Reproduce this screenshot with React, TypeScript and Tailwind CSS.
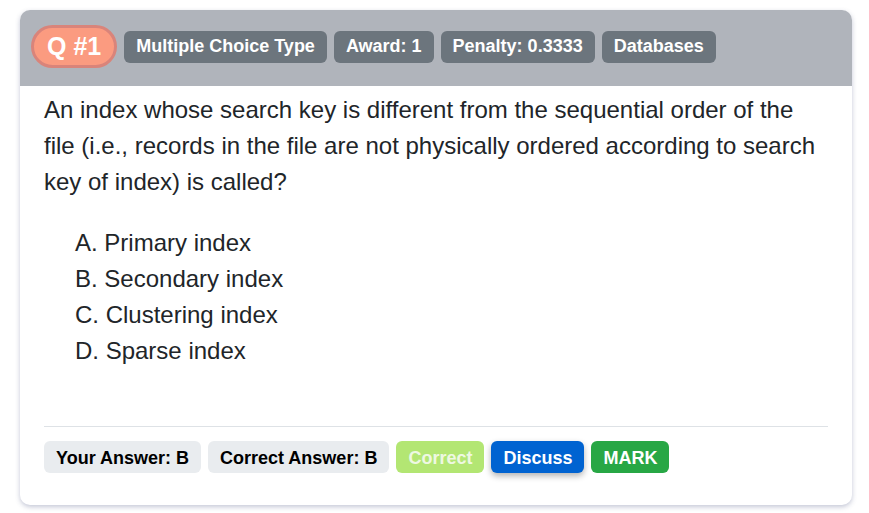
const badges = ["Multiple Choice Type", "Award: 1", "Penalty: 0.3333", "Databases"]

const options = [
  "A. Primary index",
  "B. Secondary index",
  "C. Clustering index",
  "D. Sparse index",
]

export default function App() {
  return (
    <div className="min-h-[513px] bg-white pl-5 pr-[17px] pt-[10px] font-['Liberation_Sans',Arial,sans-serif]">
      <div className="overflow-hidden rounded-[10px] bg-white shadow-[0_2px_5px_rgba(60,70,120,0.3)]">
        <div className="flex h-[76px] items-center gap-[7px] bg-[#b0b4bb] px-[11px] pb-[3px]">
          <span className="flex h-[43px] items-center rounded-full border-[3px] border-[#d9847a] bg-[#fb9b80] px-[13px] text-[25px] font-bold text-white">
            Q #1
          </span>
          {badges.map((b) => (
            <span
              key={b}
              className="flex h-8 items-center rounded-md bg-[#6c757d] px-3 text-[18px] font-bold text-white"
            >
              {b}
            </span>
          ))}
        </div>

        <div className="px-6 pb-8 pt-[6px] text-[#212529]">
          <p className="text-[24px] leading-9">
            An index whose search key is different from the sequential order of
            the file (i.e., records in the file are not physically ordered
            according to search key of index) is called?
          </p>

          <ul className="mt-[25px] pl-[31px] text-[24px] leading-9">
            {options.map((o) => (
              <li key={o}>{o}</li>
            ))}
          </ul>

          <hr className="mt-[57px] border-[#dee2e6]" />

          <div className="mt-[14px] flex gap-[7px]">
            <span className="flex h-8 items-center rounded-md bg-[#e9ecef] px-3 pt-[2px] text-[18px] font-bold text-black">
              Your Answer: B
            </span>
            <span className="flex h-8 items-center rounded-md bg-[#e9ecef] px-3 pt-[2px] text-[18px] font-bold text-black">
              Correct Answer: B
            </span>
            <span className="flex h-8 items-center rounded-md bg-[#b3e673] px-3 pt-[2px] text-[18px] font-bold text-[#eef8e2]">
              Correct
            </span>
            <button
              type="button"
              className="flex h-8 items-center rounded-md bg-[#0063d1] px-3 pt-[2px] text-[18px] font-bold text-white shadow-[0_3px_6px_rgba(0,0,0,0.3)]"
            >
              Discuss
            </button>
            <button
              type="button"
              className="flex h-8 items-center rounded-md bg-[#28a745] px-3 pt-[2px] text-[18px] font-bold text-white"
            >
              MARK
            </button>
          </div>
        </div>
      </div>
    </div>
  )
}
